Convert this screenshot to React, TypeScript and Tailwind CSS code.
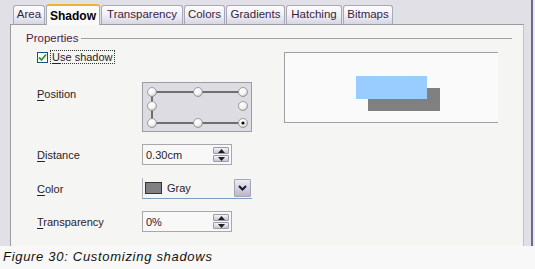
import React from "react";

const tabs = [
  { label: "Area", w: 32 },
  { label: "Shadow", w: 54, active: true },
  { label: "Transparency", w: 82 },
  { label: "Colors", w: 41 },
  { label: "Gradients", w: 59 },
  { label: "Hatching", w: 56 },
  { label: "Bitmaps", w: 50 },
];

const Mnemonic: React.FC<{ text: string }> = ({ text }) => (
  <span>
    <span className="underline underline-offset-2">{text[0]}</span>
    {text.slice(1)}
  </span>
);

const Spin: React.FC = () => (
  <div className="flex flex-col gap-[1px] mr-[2px]">
    {[0, 1].map((i) => (
      <div
        key={i}
        className="w-[16px] h-[7px] border border-[#9a9aa8] rounded-[1px] bg-gradient-to-b from-[#f4f4f8] to-[#c8c8d6] flex items-center justify-center"
      >
        <svg width="7" height="4" viewBox="0 0 7 4">
          {i === 0 ? (
            <path d="M0 4 L3.5 0 L7 4 Z" fill="#202020" />
          ) : (
            <path d="M0 0 L3.5 4 L7 0 Z" fill="#202020" />
          )}
        </svg>
      </div>
    ))}
  </div>
);

const Field: React.FC<{ value: string }> = ({ value }) => (
  <div className="w-[90px] h-[21px] border border-[#a8a8a8] bg-[#f8f8f8] flex items-center justify-between pl-[3px]">
    <span>{value}</span>
    <Spin />
  </div>
);

const PositionBox: React.FC = () => {
  const pts: [number, number][] = [
    [9, 9], [55, 9], [100, 9],
    [9, 23], [100, 23],
    [9, 40], [55, 40], [100, 40],
  ];
  return (
    <div className="w-[110px] h-[50px] border border-[#9c9ca4] bg-[#dddce2]">
      <svg width="108" height="48" viewBox="0 0 108 48">
        <defs>
          <radialGradient id="rb" cx="40%" cy="35%" r="70%">
            <stop offset="0%" stopColor="#ffffff" />
            <stop offset="60%" stopColor="#f2f2f2" />
            <stop offset="100%" stopColor="#b8b8b8" />
          </radialGradient>
        </defs>
        <line x1="9" y1="9" x2="100" y2="9" stroke="#000" strokeWidth="1" />
        <line x1="9" y1="40" x2="100" y2="40" stroke="#000" strokeWidth="1" />
        <line x1="9" y1="9" x2="9" y2="40" stroke="#000" strokeWidth="1" />
        {pts.map(([x, y], i) => (
          <circle key={i} cx={x} cy={y} r="4.5" fill="url(#rb)" stroke="#8c8c8c" strokeWidth="0.8" />
        ))}
        <circle cx="100" cy="40" r="1.6" fill="#000" />
      </svg>
    </div>
  );
};

export default function App() {
  return (
    <div className="w-[535px] h-[269px] bg-[#f8f8f8] flex flex-col font-['Liberation_Sans',Arial,sans-serif] text-[11px] text-[#2a222a] overflow-hidden">
      {/* dialog */}
      <div className="h-[246px] flex bg-[#e1e0e6]">
        <div className="flex-1 flex flex-col pl-[10px]">
          {/* tab row */}
          <div className="h-[24px] flex items-end pl-[3px] gap-[1px]">
            {tabs.map((t) =>
              t.active ? (
                <div
                  key={t.label}
                  className="h-[21px] -mb-[1px] relative z-10 flex items-center justify-center border-x border-[#a8a8b4] border-t-2 border-t-[#f0b232] rounded-t-[3px] bg-[#fafafa] font-bold text-[12px] text-black"
                  style={{ width: t.w }}
                >
                  {t.label}
                </div>
              ) : (
                <div
                  key={t.label}
                  className="h-[19px] flex items-center justify-center border border-b-0 border-[#a8a8b8] rounded-t-[3px] bg-gradient-to-b from-[#fdfdff] via-[#f0f0f6] to-[#d6d6e4] text-[11.5px] text-[#3a1c3a]"
                  style={{ width: t.w }}
                >
                  {t.label}
                </div>
              )
            )}
          </div>

          {/* panel */}
          <div className="flex-1 w-[514px] border-t border-l border-[#9c9ca0] border-r border-r-[#c4c4b0] bg-[#f5f5f3] flex flex-col">
            <div className="flex items-center pl-[15px] pr-[11px] pt-[5px]">
              <span className="text-[11.5px] text-[#4a1c4a]">Properties</span>
              <div className="flex-1 h-[1px] bg-[#a0a0a0] ml-[3px]" />
            </div>

            <div className="flex pl-[26px] mt-[3px]">
              {/* left column */}
              <div className="w-[215px] flex flex-col">
                <div className="h-[14px] flex items-center">
                  <div className="w-[11px] h-[11px] border border-[#1c5180] bg-white flex items-center justify-center">
                    <svg width="9" height="9" viewBox="0 0 9 9">
                      <path d="M1 4.5 L3.5 7 L8 1.5" fill="none" stroke="#21a121" strokeWidth="1.8" />
                    </svg>
                  </div>
                  <span className="ml-[2px] px-[1px] border border-dotted border-[#333] leading-[12px]">
                    <Mnemonic text="Use shadow" />
                  </span>
                </div>

                <div className="flex mt-[18px]">
                  <div className="w-[105px] pt-[4px]">
                    <Mnemonic text="Position" />
                  </div>
                  <PositionBox />
                </div>

                <div className="flex items-center mt-[12px]">
                  <div className="w-[105px]">
                    <Mnemonic text="Distance" />
                  </div>
                  <Field value="0.30cm" />
                </div>

                <div className="flex items-center mt-[13px]">
                  <div className="w-[105px]">
                    <Mnemonic text="Color" />
                  </div>
                  <div className="w-[110px] h-[21px] border-l border-b border-[#7f9cc0] border-l-[#b0b0b8] flex items-center justify-between pl-[2px]">
                    <div className="flex items-center">
                      <div className="w-[17px] h-[12px] bg-[#808080] border border-[#333]" />
                      <span className="ml-[5px]">Gray</span>
                    </div>
                    <div className="w-[17px] h-[18px] mr-[1px] border border-[#a4a4b4] rounded-[1px] bg-gradient-to-b from-[#ececf2] to-[#b8b8cc] flex items-center justify-center">
                      <svg width="9" height="6" viewBox="0 0 9 6">
                        <path d="M1 1 L4.5 4.5 L8 1" fill="none" stroke="#1a1a2a" strokeWidth="2" />
                      </svg>
                    </div>
                  </div>
                </div>

                <div className="flex items-center mt-[12px]">
                  <div className="w-[105px]">
                    <Mnemonic text="Transparency" />
                  </div>
                  <Field value="0%" />
                </div>
              </div>

              {/* preview */}
              <div className="ml-[32px] mt-[2px] w-[214px] h-[71px] border-t border-l border-b border-[#a0a0a0] bg-[#fafafa] pl-[71px] pt-[23px]">
                <div className="relative w-[84px] h-[35px]">
                  <div className="absolute left-[12px] top-[12px] w-[72px] h-[23px] bg-[#808080]" />
                  <div className="absolute left-0 top-0 w-[71px] h-[23px] bg-[#99ccff]" />
                </div>
              </div>
            </div>
          </div>
        </div>
        {/* right window frame */}
        <div className="w-[5px] bg-[#e1e0e6]" />
        <div className="w-[2px] bg-[#6c6c88]" />
        <div className="w-[2px] bg-[#ececf0]" />
      </div>

      {/* caption */}
      <div className="pl-[3px] pt-[1px] italic text-[13px] tracking-[0.7px] text-[#111]">
        Figure 30: Customizing shadows
      </div>
    </div>
  );
}
